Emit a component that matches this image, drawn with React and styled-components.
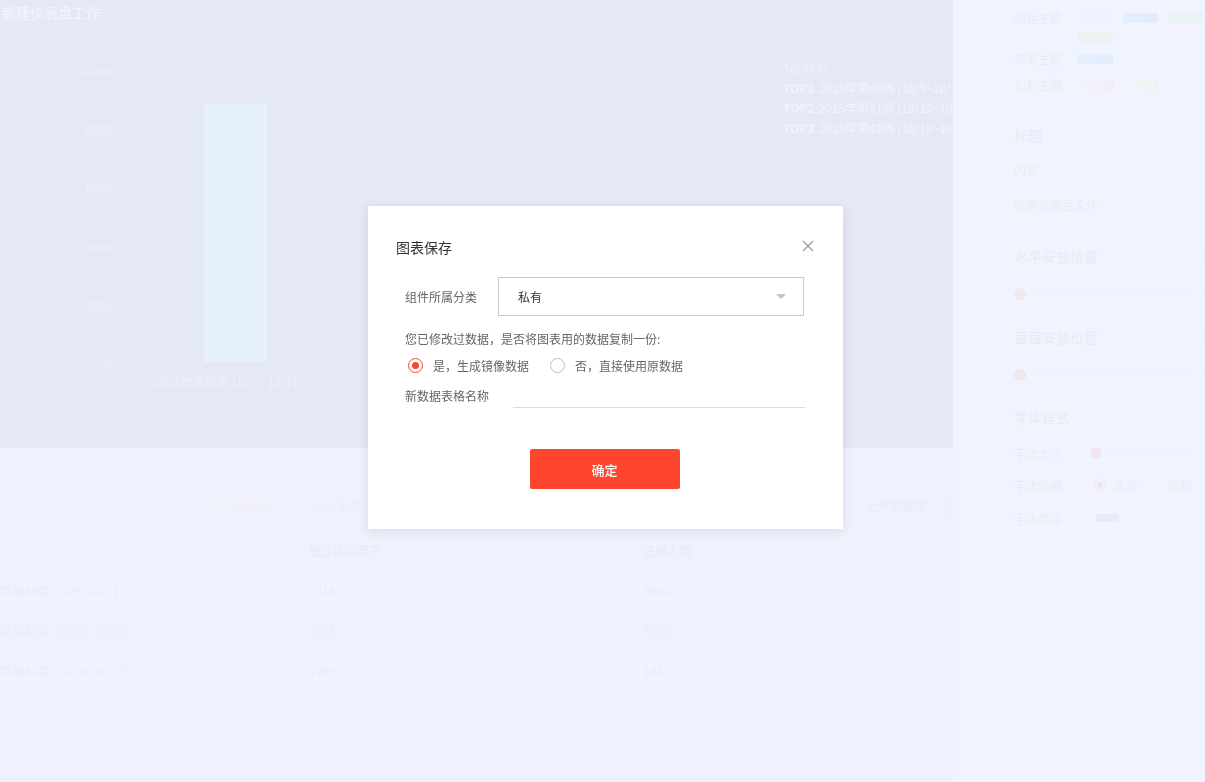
import React from "react";
import styled, { createGlobalStyle } from "styled-components";

const GlobalStyle = createGlobalStyle`
  html, body {
    margin: 0;
    padding: 0;
    height: 100%;
    overflow: hidden;
    font-family: "Noto Sans CJK SC", "Noto Sans", sans-serif;
  }
  #root { height: 100%; }
  * { box-sizing: border-box; }
`;

const Page = styled.div`
  display: flex;
  height: 100vh;
  width: 100vw;
`;

const Main = styled.div`
  width: 953px;
  flex: none;
  display: flex;
  flex-direction: column;
`;

const ChartArea = styled.section`
  height: 448px;
  background: #66758d;
  border-bottom: 1px solid #5a6880;
  position: relative;
`;

const ChartTitle = styled.div`
  height: 24px;
  line-height: 24px;
  font-size: 14px;
  color: #ffffff;
  padding-left: 2px;
`;

const ChartBody = styled.div`
  display: flex;
  align-items: flex-start;
`;

const ChartSvg = styled.svg`
  display: block;
  flex: none;
  font-family: "Noto Sans CJK SC", sans-serif;
`;

const Legend = styled.div`
  margin: 34px 0 0 12px;
  height: 156px;
  border-left: 1px solid rgba(255, 255, 255, 0.25);
  padding-left: 10px;
  font-size: 12px;
  line-height: 20px;
  color: rgba(255, 255, 255, 0.85);
  white-space: nowrap;
  overflow: hidden;
  width: 180px;
`;

const LegendHead = styled.div`
  color: rgba(255, 255, 255, 0.7);
`;

const LegendItem = styled.div`
  b {
    font-weight: 700;
    margin-right: 4px;
  }
`;

const DataArea = styled.section`
  flex: 1;
  background: #dfe3f3;
  padding-top: 42px;
`;

const Toolbar = styled.div`
  display: flex;
  align-items: center;
  height: 30px;
  padding-left: 207px;
  padding-right: 8px;
  gap: 13px;
`;

const ToolButton = styled.div`
  height: 28px;
  display: flex;
  align-items: center;
  gap: 4px;
  padding: 0 10px;
  font-size: 12px;
  color: ${(p) => (p.$accent ? "#f5a79c" : "#8c92a8")};
  border: 1px solid #d6dbee;
  background: transparent;
  margin-left: ${(p) => (p.$push ? "auto" : "0")};
  min-width: ${(p) => p.$w || "auto"};
`;

const ToolInput = styled.div`
  height: 28px;
  width: 68px;
  border: 1px solid #d6dbee;
  display: flex;
  align-items: center;
  padding-left: 13px;
  font-size: 12px;
  color: #9aa0b6;
`;

const Table = styled.div`
  margin-top: 11px;
`;

const TRow = styled.div`
  display: grid;
  grid-template-columns: 309px 334px 1fr;
  height: 40px;
  align-items: center;
  font-size: 12px;
  color: ${(p) => (p.$head ? "#6a7088" : "#8d93aa")};
  background: ${(p) => (p.$alt ? "#e6e9f7" : "transparent")};
  border-bottom: 1px solid #d6dbee;
  white-space: nowrap;
  overflow: hidden;
`;

const Sidebar = styled.aside`
  flex: 1;
  background: #ffffff;
  box-shadow: -3px 0 6px rgba(0, 0, 0, 0.12);
  padding: 8px 0 0 61px;
  overflow: hidden;
  position: relative;
`;

const ThemeRow = styled.div`
  display: flex;
  align-items: flex-start;
  margin-top: ${(p) => p.$mt || 0}px;
  font-size: 12px;
  color: #8a8a8a;
`;

const ThemeLabel = styled.div`
  width: 64px;
  flex: none;
  line-height: 20px;
`;

const Swatches = styled.div`
  display: flex;
  flex-wrap: wrap;
  gap: 9px 10px;
  margin-top: 5px;
  width: 140px;
`;

const Swatch = styled.div`
  width: 35px;
  height: 10px;
  background: ${(p) => p.$bg};
`;

const SideRow = styled.div`
  display: flex;
  align-items: center;
  height: 20px;
  margin-top: ${(p) => p.$mt || 0}px;
  font-size: ${(p) => (p.$big ? 14 : 12)}px;
  color: ${(p) => (p.$big ? "#777" : "#8a8a8a")};
  white-space: nowrap;
  width: 210px;
`;

const SideLabel = styled.div`
  width: ${(p) => p.$w || 76}px;
  flex: none;
`;

const SwitchWrap = styled.div`
  margin-left: auto;
  display: flex;
  align-items: center;
  gap: 4px;
  font-size: 12px;
  color: #aaa;
`;

const SwitchDot = styled.span`
  width: 12px;
  height: 12px;
  border-radius: 50%;
  border: 1px solid #ddd;
`;

const SliderTrack = styled.div`
  flex: 1;
  display: flex;
  align-items: center;
  gap: 4px;
`;

const Knob = styled.span`
  width: 12px;
  height: 12px;
  border-radius: 50%;
  background: #ff4a33;
  flex: none;
`;

const Line = styled.span`
  flex: 1;
  height: 2px;
  background: #e6e6e6;
`;

const SliderValue = styled.span`
  width: ${(p) => p.$w || 20}px;
  text-align: right;
  font-size: 12px;
  color: #aaa;
  flex: none;
`;

const MiniRadio = styled.span`
  width: 12px;
  height: 12px;
  border-radius: 50%;
  border: 1px solid ${(p) => (p.$on ? "#ff4a33" : "#ddd")};
  display: inline-flex;
  align-items: center;
  justify-content: center;
  margin-right: 8px;
  &::after {
    content: "";
    width: 6px;
    height: 6px;
    border-radius: 50%;
    background: ${(p) => (p.$on ? "#ff4a33" : "transparent")};
  }
`;

const MiniOption = styled.span`
  display: inline-flex;
  align-items: center;
  margin-right: 10px;
  color: #8a8a8a;
`;

const ColorBox = styled.span`
  border-left: 1px solid #e2e2e2;
  padding-left: 5px;
  height: 16px;
  display: flex;
  align-items: center;
  &::after {
    content: "";
    width: 23px;
    height: 8px;
    background: #8a8a8a;
  }
`;

/* ---------- Modal ---------- */

const Mask = styled.div`
  position: fixed;
  inset: 0;
  background: rgba(240, 243, 254, 0.92);
  display: flex;
  justify-content: center;
  align-items: flex-start;
  padding: 206px 0 0 6px;
`;

const Modal = styled.div`
  position: relative;
  width: 475px;
  height: 323px;
  background: #ffffff;
  box-shadow: 0 2px 10px rgba(60, 70, 110, 0.15);
  padding: 31px 30px 0 28px;
`;

const ModalTitle = styled.h3`
  margin: 0;
  font-size: 14px;
  line-height: 20px;
  font-weight: 400;
  color: #333;
`;

const CloseBtn = styled.button`
  position: absolute;
  top: 34px;
  right: 29px;
  width: 12px;
  height: 12px;
  padding: 0;
  border: none;
  background: none;
  cursor: pointer;
  display: flex;
`;

const Form = styled.div`
  margin: 20px 0 0 9px;
  display: flex;
  flex-direction: column;
`;

const FieldRow = styled.div`
  display: flex;
  align-items: center;
  margin-top: ${(p) => p.$mt || 0}px;
`;

const FieldLabel = styled.label`
  width: ${(p) => p.$w}px;
  flex: none;
  font-size: 12px;
  color: #666;
  line-height: 16px;
`;

const Select = styled.div`
  width: 306px;
  height: 39px;
  border: 1px solid #c9c9c9;
  display: flex;
  align-items: center;
  padding: 0 17px 0 19px;
  font-size: 12px;
  color: #333;
`;

const Caret = styled.span`
  margin-left: auto;
  width: 0;
  height: 0;
  border-left: 5px solid transparent;
  border-right: 5px solid transparent;
  border-top: 5px solid #c4c4c4;
`;

const Prompt = styled.p`
  margin: 15px 0 0;
  font-size: 12px;
  line-height: 16px;
  color: #666;
`;

const RadioGroup = styled.div`
  display: flex;
  align-items: center;
  margin: 10px 0 0 3px;
  height: 16px;
`;

const RadioOption = styled.label`
  display: flex;
  align-items: center;
  gap: 10px;
  font-size: 12px;
  color: #666;
  margin-right: 21px;
`;

const RadioCircle = styled.span`
  width: 15px;
  height: 15px;
  border-radius: 50%;
  border: ${(p) => (p.$on ? "1.5px solid #f04a2e" : "1px solid #bdbdbd")};
  display: flex;
  align-items: center;
  justify-content: center;
  &::after {
    content: "";
    width: 7px;
    height: 7px;
    border-radius: 50%;
    background: ${(p) => (p.$on ? "#f04a2e" : "transparent")};
  }
`;

const LineInput = styled.div`
  width: 292px;
  height: 24px;
  border-bottom: 1px solid #dcdcdc;
`;

const Footer = styled.div`
  display: flex;
  justify-content: center;
  margin-top: 41px;
`;

const PrimaryButton = styled.button`
  width: 150px;
  height: 40px;
  border: none;
  border-radius: 2px;
  background: #fd4530;
  color: #fff;
  font-family: inherit;
  font-size: 13px;
  font-weight: 500;
  cursor: pointer;
`;

const yTicks = [
  { v: "10000", y: 48 },
  { v: "8000", y: 106 },
  { v: "6000", y: 164 },
  { v: "4000", y: 224 },
  { v: "2000", y: 283 },
  { v: "0", y: 339 },
];

const rows = [
  ["年第40周 (10/5~10/11)", "2316", "3900"],
  ["年第41周 (10/12~10/18)", "2026", "3759"],
  ["年第42周 (10/19~10/25)", "1905", "1443"],
];

export default function App() {
  return (
    <>
      <GlobalStyle />
      <Page>
        <Main>
          <ChartArea>
            <ChartTitle>新建仪表盘工作</ChartTitle>
            <ChartBody>
              <ChartSvg width="760" height="400" viewBox="0 0 760 400">
                {yTicks.map((t) => (
                  <text
                    key={t.v}
                    x="112"
                    y={t.y + 4}
                    textAnchor="end"
                    fontSize="12"
                    fill="rgba(255,255,255,0.55)"
                  >
                    {t.v}
                  </text>
                ))}
                <rect x="204" y="80" width="63" height="258" fill="#6fd0ea" />
                <text
                  x="228"
                  y="363"
                  textAnchor="middle"
                  fontSize="12"
                  fill="rgba(255,255,255,0.6)"
                >
                  2015年第40周 (10/5~10/11)
                </text>
              </ChartSvg>
              <Legend>
                <LegendHead>Top排名</LegendHead>
                <LegendItem>
                  <b>TOP1</b>2015年第40周 (10/5~10/11)
                </LegendItem>
                <LegendItem>
                  <b>TOP2</b>2015年第41周 (10/12~10/18)
                </LegendItem>
                <LegendItem>
                  <b>TOP3</b>2015年第42周 (10/19~10/25)
                </LegendItem>
              </Legend>
            </ChartBody>
          </ChartArea>
          <DataArea>
            <Toolbar>
              <ToolButton $accent>+ 添加标注</ToolButton>
              <ToolInput>站点名称</ToolInput>
              <ToolButton $push $w="100px">
                <span style={{ marginLeft: 10 }}>上传数据源</span>
              </ToolButton>
            </Toolbar>
            <Table>
              <TRow $head>
                <span />
                <span>独立访问用户</span>
                <span>注册人数</span>
              </TRow>
              {rows.map((r, i) => (
                <TRow key={i} $alt={i % 2 === 0}>
                  <span>{r[0]}</span>
                  <span>{r[1]}</span>
                  <span>{r[2]}</span>
                </TRow>
              ))}
            </Table>
          </DataArea>
        </Main>
        <Sidebar>
          <ThemeRow>
            <ThemeLabel>纯色主题</ThemeLabel>
            <Swatches>
              <Swatch $bg="#ececec" />
              <Swatch $bg="linear-gradient(90deg,#3fc4ff,#6a7bff)" />
              <Swatch $bg="#8fdc8a" />
              <Swatch $bg="#d9e36a" />
            </Swatches>
          </ThemeRow>
          <ThemeRow $mt={7}>
            <ThemeLabel>渐变主题</ThemeLabel>
            <Swatches>
              <Swatch $bg="linear-gradient(90deg,#5ab8ff,#57a4f0)" />
            </Swatches>
          </ThemeRow>
          <ThemeRow $mt={6}>
            <ThemeLabel>幻彩主题</ThemeLabel>
            <Swatches>
              <Swatch $bg="linear-gradient(90deg,#ffffff,#ffb25a)" />
              <Swatch $bg="linear-gradient(90deg,#ffffff,#ffd84a)" />
            </Swatches>
          </ThemeRow>
          <SideRow $mt={30} $big>标题</SideRow>
          <SideRow $mt={14}>内容</SideRow>
          <SideRow $mt={15}>新建仪表盘工作</SideRow>
          <SideRow $mt={32} $big>
            水平安放位置
            <SwitchWrap>
              <SwitchDot />
              居中
            </SwitchWrap>
          </SideRow>
          <SideRow $mt={18}>
            <SliderTrack>
              <Knob />
              <Line />
              <SliderValue $w={24}>50%</SliderValue>
            </SliderTrack>
          </SideRow>
          <SideRow $mt={23} $big>
            垂直安放位置
            <SwitchWrap>
              <SwitchDot />
              居中
            </SwitchWrap>
          </SideRow>
          <SideRow $mt={18}>
            <SliderTrack>
              <Knob />
              <Line />
              <SliderValue $w={24}>50%</SliderValue>
            </SliderTrack>
          </SideRow>
          <SideRow $mt={22} $big>字体样式</SideRow>
          <SideRow $mt={16}>
            <SideLabel>字体大小</SideLabel>
            <SliderTrack>
              <Knob />
              <Line />
              <SliderValue $w={26}>14</SliderValue>
            </SliderTrack>
          </SideRow>
          <SideRow $mt={12}>
            <SideLabel $w={80}>字体粗细</SideLabel>
            <MiniOption>
              <MiniRadio $on />
              正常
            </MiniOption>
            <MiniOption>
              <MiniRadio />
              加粗
            </MiniOption>
          </SideRow>
          <SideRow $mt={13}>
            <SideLabel>字体颜色</SideLabel>
            <ColorBox />
          </SideRow>
        </Sidebar>
      </Page>
      <Mask>
        <Modal>
          <ModalTitle>图表保存</ModalTitle>
          <CloseBtn aria-label="关闭">
            <svg width="12" height="12" viewBox="0 0 12 12">
              <path d="M1 1L11 11M11 1L1 11" stroke="#999" strokeWidth="1.1" />
            </svg>
          </CloseBtn>
          <Form>
            <FieldRow>
              <FieldLabel $w={93}>组件所属分类</FieldLabel>
              <Select>
                私有
                <Caret />
              </Select>
            </FieldRow>
            <Prompt>您已修改过数据，是否将图表用的数据复制一份:</Prompt>
            <RadioGroup>
              <RadioOption>
                <RadioCircle $on />
                是，生成镜像数据
              </RadioOption>
              <RadioOption>
                <RadioCircle />
                否，直接使用原数据
              </RadioOption>
            </RadioGroup>
            <FieldRow $mt={11}>
              <FieldLabel $w={108}>新数据表格名称</FieldLabel>
              <LineInput />
            </FieldRow>
          </Form>
          <Footer>
            <PrimaryButton>确定</PrimaryButton>
          </Footer>
        </Modal>
      </Mask>
    </>
  );
}
